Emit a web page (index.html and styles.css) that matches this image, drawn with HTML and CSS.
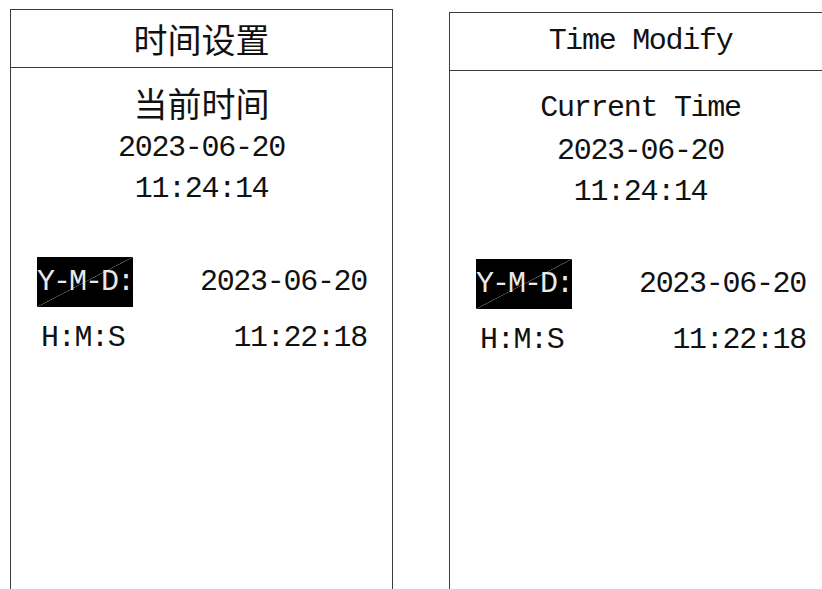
FILE: index.html
```html
<!DOCTYPE html>
<html lang="zh">

<head>
    <meta charset="UTF-8">
    <meta name="viewport" content="width=device-width, initial-scale=1.0">
    <title>时间设置 / Time Modify</title>
    <link rel="stylesheet" href="styles.css">
</head>

<body>
    <div id="screens">
        <!-- Chinese screen -->
        <div class="panel">
            <div class="panel-title cjk">时间设置</div>
            <div class="now">
                <div class="now-label cjk">当前时间</div>
                <div class="now-line">2023-06-20</div>
                <div class="now-line">11:24:14</div>
            </div>
            <div class="edit">
                <div class="row">
                    <span class="label selected">Y-M-D:</span>
                    <span class="value">2023-06-20</span>
                </div>
                <div class="row">
                    <span class="label">H:M:S</span>
                    <span class="value">11:22:18</span>
                </div>
            </div>
        </div>

        <!-- English screen -->
        <div class="panel panel-en">
            <div class="panel-title">Time Modify</div>
            <div class="now">
                <div class="now-label">Current Time</div>
                <div class="now-line">2023-06-20</div>
                <div class="now-line">11:24:14</div>
            </div>
            <div class="edit">
                <div class="row">
                    <span class="label selected">Y-M-D:</span>
                    <span class="value">2023-06-20</span>
                </div>
                <div class="row">
                    <span class="label">H:M:S</span>
                    <span class="value">11:22:18</span>
                </div>
            </div>
        </div>
    </div>
</body>

</html>
```

FILE: styles.css
```css
/* Basic page setup */
body {
    background-color: #ffffff;
    color: #111111;
    font-family: 'Liberation Mono', 'Noto Sans CJK SC', monospace;
    font-size: 30px;
    letter-spacing: -1.3px;
    margin: 0;
    overflow: hidden;
}

/* Both screens side by side */
#screens {
    display: flex;
    align-items: flex-start;
    gap: 56px;
    padding: 9px 0 0 10px;
}

/* One display screen */
.panel {
    box-sizing: border-box;
    width: 383px;
    height: 620px;
    flex-shrink: 0;
    border: 1px solid #3c3c3c;
}

.panel-en {
    margin-top: 3px;
}

/* Chinese text uses the CJK font only */
.cjk {
    font-family: 'Noto Sans CJK SC', sans-serif;
    font-size: 34px;
    letter-spacing: 0;
}

/* Title bar */
.panel-title {
    height: 57px;
    line-height: 57px;
    text-align: center;
    border-bottom: 1px solid #3c3c3c;
}

/* Current time block */
.now {
    text-align: center;
    padding-top: 10px;
}

.now-label {
    line-height: 50px;
}

.panel-en .now-label {
    line-height: 46px;
    padding-top: 4px;
}

.now-line {
    line-height: 41px;
}

/* Editable rows */
.edit {
    padding: 47px 25px 0 26px;
}

.panel-en .edit {
    padding-top: 46px;
}

.row {
    display: flex;
    justify-content: space-between;
    line-height: 50px;
    white-space: nowrap;
}

.row + .row {
    margin-top: 6px;
}

.label {
    width: 96px;
    padding-left: 4px;
    box-sizing: border-box;
}

/* Highlighted (selected) field */
.label.selected {
    padding-left: 0;
    letter-spacing: -2px;
    color: #e8e8e8;
    background-color: #000000;
    background-image: linear-gradient(to bottom right, transparent calc(50% - 0.6px), #6e6e6e 50%, transparent calc(50% + 0.6px));
}
```
